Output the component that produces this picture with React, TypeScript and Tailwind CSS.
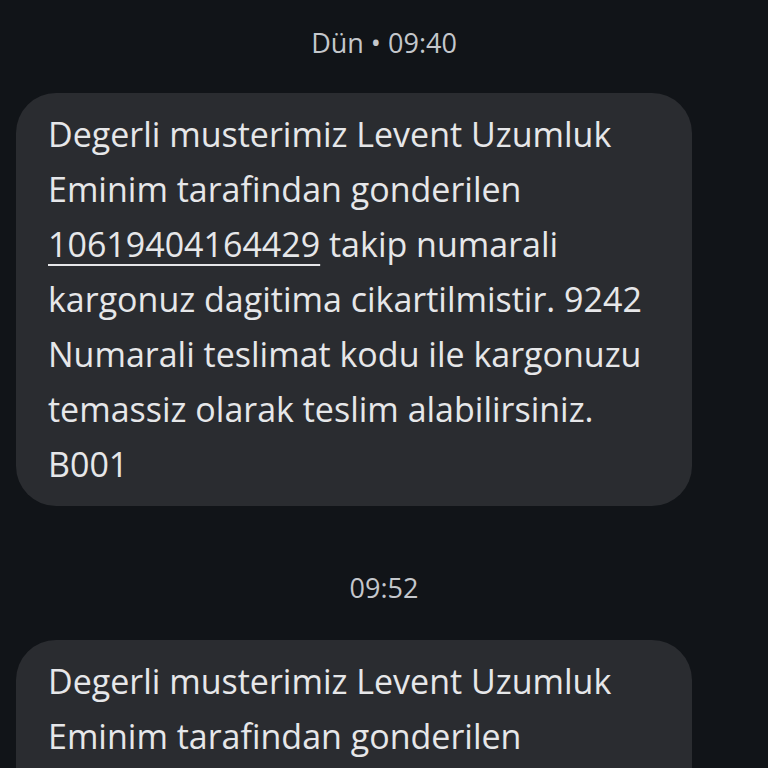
const lines1 = [
  "Degerli musterimiz Levent Uzumluk",
  "Eminim tarafindan gonderilen",
  null,
  "kargonuz dagitima cikartilmistir. 9242",
  "Numarali teslimat kodu ile kargonuzu",
  "temassiz olarak teslim alabilirsiniz.",
  "B001",
];

const Stamp = ({ text }: { text: string }) => (
  <div className="h-[50px] flex items-center justify-center text-[27px] text-[#c4c7cc]">{text}</div>
);

const Bubble = ({ lines }: { lines: (string | null)[] }) => (
  <div className="ml-4 w-[676px] bg-[#2a2c30] rounded-[40px] pl-8 pr-6 pt-[14px] pb-[14px] text-[34px] leading-[55px] text-[#e6e7e9]">
    {lines.map((l, i) =>
      l === null ? (
        <div key={i} className="whitespace-nowrap">
          <span className="underline decoration-2 underline-offset-[7px]">10619404164429</span> takip numarali
        </div>
      ) : (
        <div key={i} className="whitespace-nowrap">{l}</div>
      )
    )}
  </div>
);

export default function App() {
  return (
    <div className="w-[768px] h-[768px] overflow-hidden bg-[#111418] pt-[18px] font-['Open_Sans',sans-serif]">
      <Stamp text="Dün • 09:40" />
      <div className="mt-[25px]">
        <Bubble lines={lines1} />
      </div>
      <div className="mt-[57px]">
        <Stamp text="09:52" />
      </div>
      <div className="mt-[27px]">
        <Bubble lines={lines1} />
      </div>
    </div>
  );
}
